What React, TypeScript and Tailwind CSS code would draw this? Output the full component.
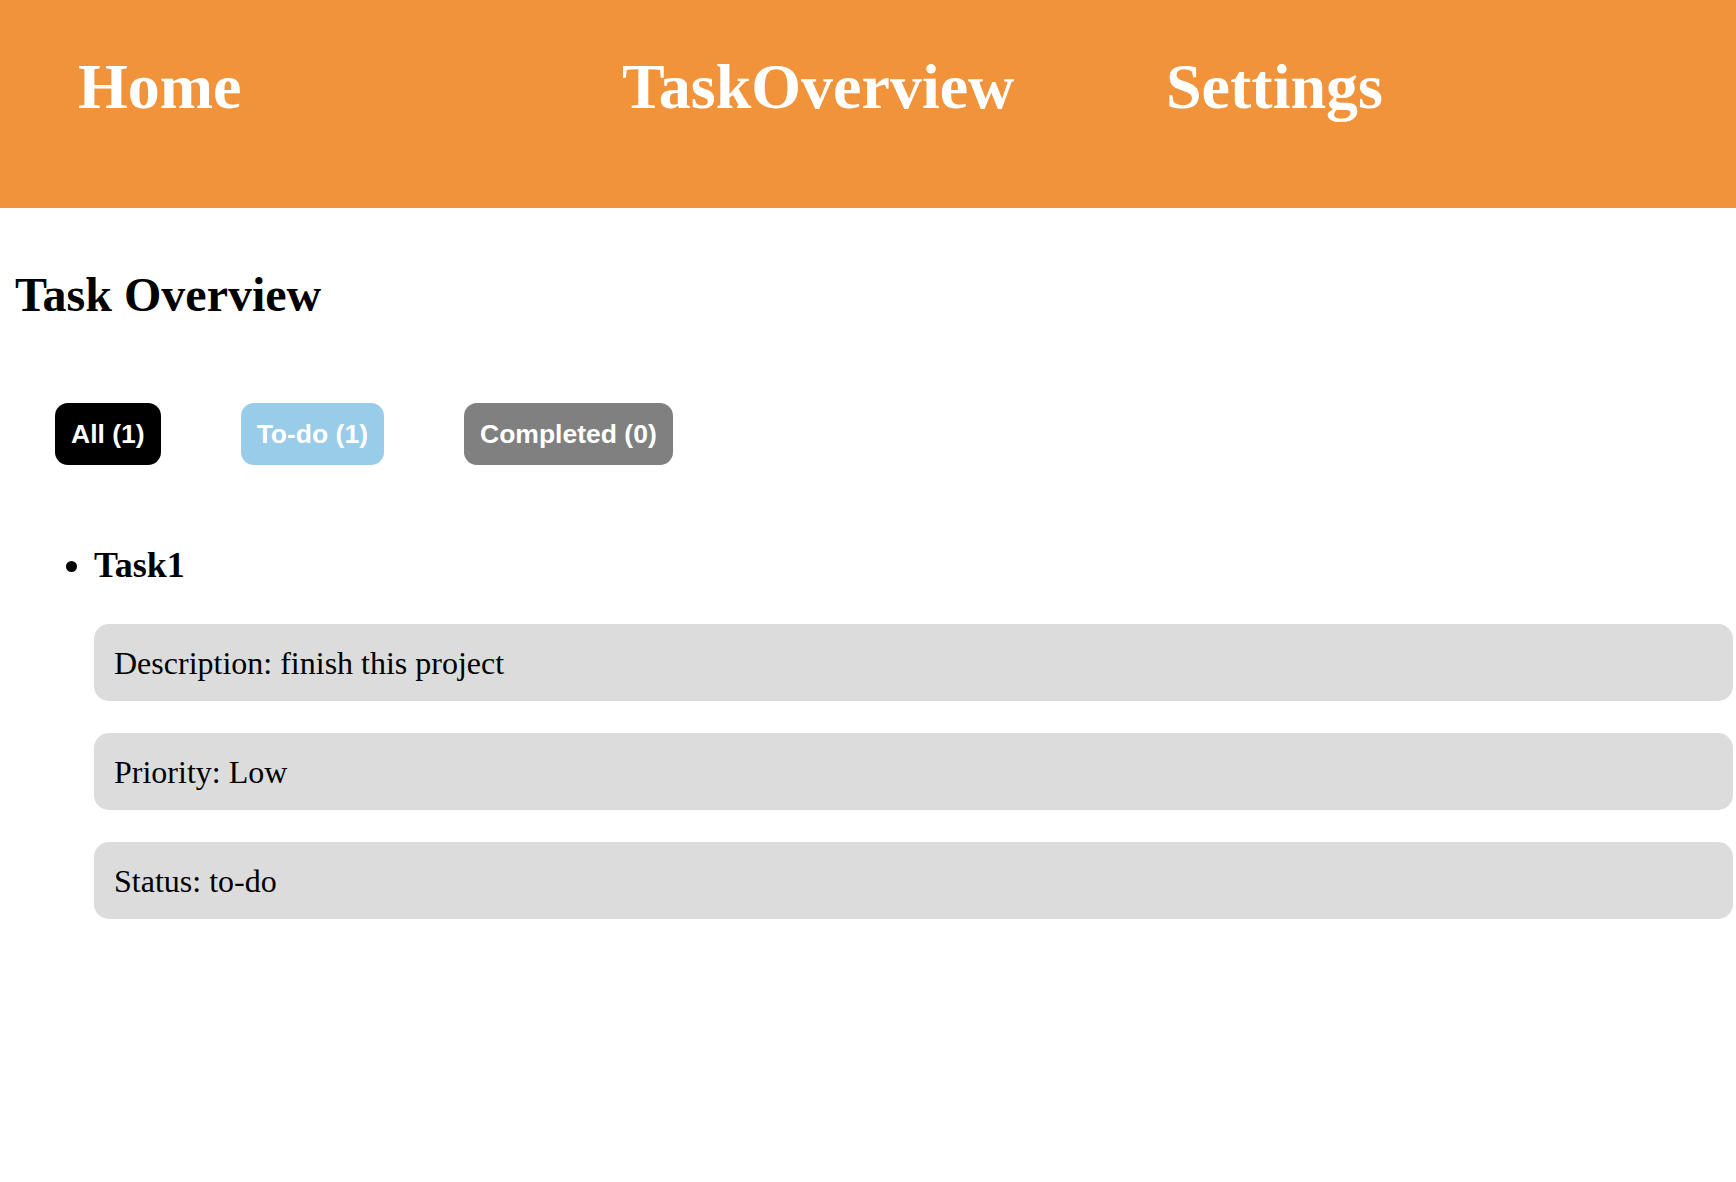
import React, { useState } from 'react';

type Filter = 'all' | 'todo' | 'completed';

interface Task {
  name: string;
  description: string;
  priority: string;
  status: 'to-do' | 'completed';
}

const tasks: Task[] = [
  { name: 'Task1', description: 'finish this project', priority: 'Low', status: 'to-do' },
];

const navLinks = ['Home', 'TaskOverview', 'Settings'];

export default function App() {
  const [filter, setFilter] = useState<Filter>('all');

  const todoCount = tasks.filter(t => t.status === 'to-do').length;
  const doneCount = tasks.filter(t => t.status === 'completed').length;

  const visible = tasks.filter(t => {
    if (filter === 'todo') return t.status === 'to-do';
    if (filter === 'completed') return t.status === 'completed';
    return true;
  });

  return (
    <div className="min-h-screen bg-white text-black font-['Liberation_Serif','Times_New_Roman',serif]">
      <header className="h-[208px] bg-[#f0933a]">
        <nav className="flex pt-[55px] pl-[78px]">
          {navLinks.map(link => (
            <a
              key={link}
              href="#"
              className="w-[544px] shrink-0 text-[64px] leading-none font-bold text-white"
            >
              {link}
            </a>
          ))}
        </nav>
      </header>

      <main className="pl-[15px] pr-[3px]">
        <h1 className="mt-[63px] text-[48px] leading-none font-bold">Task Overview</h1>

        <div className="mt-[84px] flex font-['Liberation_Sans',Arial,sans-serif] text-[26.5px] leading-none font-bold text-white">
          <button
            onClick={() => setFilter('all')}
            className="mx-10 flex h-[62px] items-center rounded-[13px] bg-black px-4"
          >
            All ({tasks.length})
          </button>
          <button
            onClick={() => setFilter('todo')}
            className="mx-10 flex h-[62px] items-center rounded-[13px] bg-[#99cce8] px-4"
          >
            To-do ({todoCount})
          </button>
          <button
            onClick={() => setFilter('completed')}
            className="mx-10 flex h-[62px] items-center rounded-[13px] bg-[#808080] px-4"
          >
            Completed ({doneCount})
          </button>
        </div>

        <ul className="mt-[82px] list-disc pl-[79px]">
          {visible.map(task => (
            <li key={task.name} className="text-[36px] leading-none font-bold">
              <span>{task.name}</span>
              <div className="mt-[41px] flex flex-col gap-8 text-[32px] font-normal">
                <div className="flex h-[77px] items-center rounded-[15px] bg-[#dcdcdc] px-5">
                  Description: {task.description}
                </div>
                <div className="flex h-[77px] items-center rounded-[15px] bg-[#dcdcdc] px-5">
                  Priority: {task.priority}
                </div>
                <div className="flex h-[77px] items-center rounded-[15px] bg-[#dcdcdc] px-5">
                  Status: {task.status}
                </div>
              </div>
            </li>
          ))}
        </ul>
      </main>
    </div>
  );
}
